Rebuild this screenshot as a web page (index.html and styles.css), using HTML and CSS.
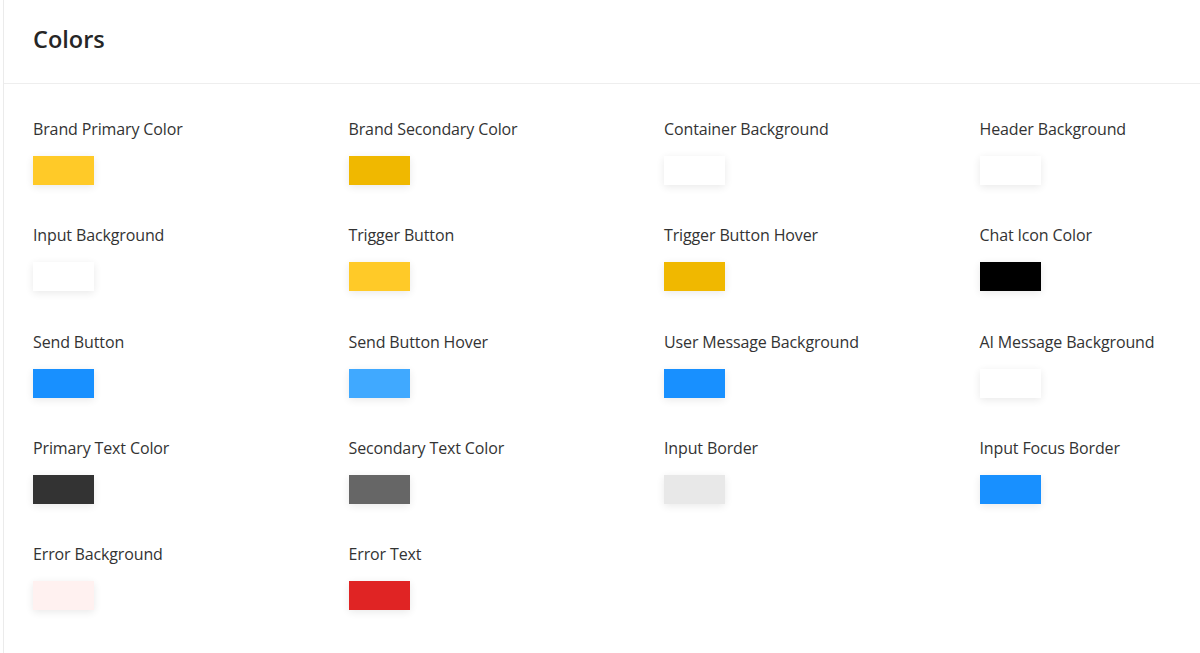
FILE: index.html
```html
<!DOCTYPE html>
<html>
<head>
<meta charset="utf-8">
<link rel="stylesheet" href="styles.css">
</head>
<body>
<div class="card">
  <div class="card-header"><h2 class="title">Colors</h2></div>
  <div class="card-body">
    <div class="grid">
      <div class="item"><div class="label">Brand Primary Color</div><div class="swatch c-primary"></div></div>
      <div class="item"><div class="label">Brand Secondary Color</div><div class="swatch c-secondary"></div></div>
      <div class="item"><div class="label">Container Background</div><div class="swatch c-white"></div></div>
      <div class="item"><div class="label">Header Background</div><div class="swatch c-white"></div></div>
      <div class="item"><div class="label">Input Background</div><div class="swatch c-white"></div></div>
      <div class="item"><div class="label">Trigger Button</div><div class="swatch c-primary"></div></div>
      <div class="item"><div class="label">Trigger Button Hover</div><div class="swatch c-secondary"></div></div>
      <div class="item"><div class="label">Chat Icon Color</div><div class="swatch c-black"></div></div>
      <div class="item"><div class="label">Send Button</div><div class="swatch c-blue"></div></div>
      <div class="item"><div class="label">Send Button Hover</div><div class="swatch c-blue-light"></div></div>
      <div class="item"><div class="label">User Message Background</div><div class="swatch c-blue"></div></div>
      <div class="item"><div class="label">AI Message Background</div><div class="swatch c-white"></div></div>
      <div class="item"><div class="label">Primary Text Color</div><div class="swatch c-dark"></div></div>
      <div class="item"><div class="label">Secondary Text Color</div><div class="swatch c-grey"></div></div>
      <div class="item"><div class="label">Input Border</div><div class="swatch c-border"></div></div>
      <div class="item"><div class="label">Input Focus Border</div><div class="swatch c-blue"></div></div>
      <div class="item"><div class="label">Error Background</div><div class="swatch c-error-bg"></div></div>
      <div class="item"><div class="label">Error Text</div><div class="swatch c-error"></div></div>
    </div>
  </div>
</div>
</body>
</html>
```
FILE: styles.css
```css
html, body {
  margin: 0;
  padding: 0;
  background: #ffffff;
  overflow: hidden;
}
body {
  font-family: "Open Sans", "Noto Sans", sans-serif;
  color: #333333;
}
.card {
  margin-left: 3px;
  width: 1197px;
  min-height: 100vh;
  box-sizing: border-box;
  border-left: 1px solid #ebebeb;
  background: #fff;
  overflow: hidden;
}
.card-header {
  height: 84px;
  border-bottom: 1px solid #eeeeee;
  padding-left: 29px;
  padding-bottom: 6px;
  display: flex;
  align-items: center;
  box-sizing: border-box;
}
.title {
  margin: 0;
  font-size: 23.5px;
  font-weight: 600;
  color: #262626;
  letter-spacing: 0;
}
.card-body {
  padding: 33px 0 40px 29px;
}
.grid {
  display: grid;
  grid-template-columns: repeat(4, 291.5px);
  column-gap: 24px;
  row-gap: 38.25px;
}
.item {
  display: flex;
  flex-direction: column;
}
.label {
  font-size: 16px;
  line-height: 24px;
  color: #333333;
  letter-spacing: -0.13px;
}
.swatch {
  margin-top: 15px;
  width: 61px;
  height: 29px;
  box-shadow: 0 2px 8px rgba(0, 0, 0, 0.09);
}
.c-primary { background: #ffca28; }
.c-secondary { background: #f0b800; }
.c-white { background: #ffffff; }
.c-black { background: #000000; }
.c-blue { background: #1890ff; }
.c-blue-light { background: #40a9ff; }
.c-dark { background: #333333; }
.c-grey { background: #666666; }
.c-border { background: #e8e8e8; }
.c-error-bg { background: #fff1f0; }
.c-error { background: #e02424; }
```
